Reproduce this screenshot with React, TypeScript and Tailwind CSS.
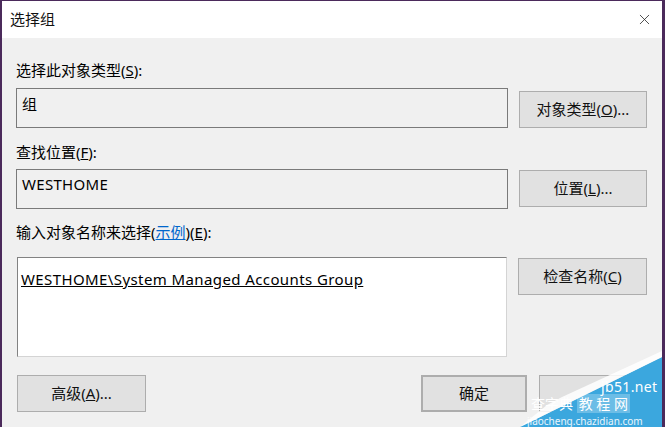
import { X } from "lucide-react";

const font = "font-['Noto_Sans','Noto_Sans_CJK_SC',sans-serif]";

const Btn = ({ children, className = "" }: { children?: React.ReactNode; className?: string }) => (
    <div className={`flex items-center justify-center bg-[#e1e1e1] border border-[#adadad] text-[15px] text-[#111] ${className}`}>
        {children}
    </div>
);

// site watermark stamped on the bottom-right corner
const Watermark = () => (
    <div className="absolute right-0 bottom-0 w-[145px] h-[80px] pointer-events-none">
        <svg width="145" height="80" viewBox="0 0 145 80" className="absolute inset-0">
            <polygon points="3,80 145,10 145,80" fill="#3ba7de" />
            <polygon points="3,80 145,10 145,4 45,50 30,58" fill="#ffffff" opacity="0.85" />
        </svg>
        <div className="absolute left-[84px] top-[33px] text-[14px] leading-[14px] text-white tracking-wide">jb51.net</div>
        <div className="absolute left-[14px] top-[49px] text-[14px] leading-[15px] text-white">
            查字典 <span className="bg-white/25 px-[2px]">教 程 网</span>
        </div>
        <div className="absolute left-[10px] top-[69px] text-[10px] leading-[11px] text-white/90">jiaocheng.chazidian.com</div>
    </div>
);

const App = () => {
    return (
        <div className={`relative w-[665px] h-[427px] overflow-hidden bg-[#f0f0f0] border-t border-l-2 border-r-[3px] border-[#4b2a5b] ${font} text-black`}>
            {/* title bar */}
            <div className="flex items-center justify-between h-[37px] bg-white pl-[8px] pr-[9px]">
                <span className="text-[15px] text-[#111]">选择组</span>
                <X size={17} strokeWidth={1.1} className="text-[#222]" />
            </div>

            <div className="flex flex-col pl-[14px] pr-[15px]">
                <div className="mt-[22px] h-[20px] text-[15px] leading-[20px]">选择此对象类型(<u>S</u>):</div>
                <div className="flex gap-[11px] mt-[8px]">
                    <div className="w-[492px] h-[40px] border border-[#7a7a7a] pl-[5px] pt-[5px] text-[15px] leading-[20px]">组</div>
                    <Btn className="w-[128px] h-[37px] mt-[3px]">对象类型(<u>O</u>)...</Btn>
                </div>

                <div className="mt-[14px] h-[20px] text-[15px] leading-[20px]">查找位置(<u>F</u>):</div>
                <div className="flex gap-[11px] mt-[7px]">
                    <div className="w-[492px] h-[40px] border border-[#7a7a7a] pl-[5px] pt-[4px] text-[15px] leading-[20px] tracking-[0.3px]">WESTHOME</div>
                    <Btn className="w-[128px] h-[37px] mt-[1px]">位置(<u>L</u>)...</Btn>
                </div>

                <div className="mt-[13px] h-[20px] text-[15px] leading-[20px]">
                    输入对象名称来选择(<span className="text-[#0066cc] underline">示例</span>)(<u>E</u>):
                </div>
                <div className="flex gap-[11px] mt-[15px]">
                    <div className="ml-[1px] w-[491px] h-[100px] bg-white border-t border-l border-t-[#828282] border-l-[#828282] border-r border-b border-r-[#d4d4d4] border-b-[#d4d4d4] pl-[3px] pt-[11px] text-[15px] leading-[20px] tracking-[0.4px]">
                        <span className="underline">WESTHOME\System Managed Accounts Group</span>
                    </div>
                    <Btn className="w-[129px] h-[37px] mt-[1px]">检查名称(<u>C</u>)</Btn>
                </div>

                <div className="flex mt-[18px] ml-[1px]">
                    <Btn className="w-[129px] h-[37px]">高级(<u>A</u>)...</Btn>
                    <div className="flex-1" />
                    <Btn className="w-[106px] h-[37px] border-2 border-[#0078d7]">确定</Btn>
                    <Btn className="w-[108px] h-[37px] ml-[12px]" />
                </div>
            </div>

            <Watermark />
        </div>
    );
};

export default App;
